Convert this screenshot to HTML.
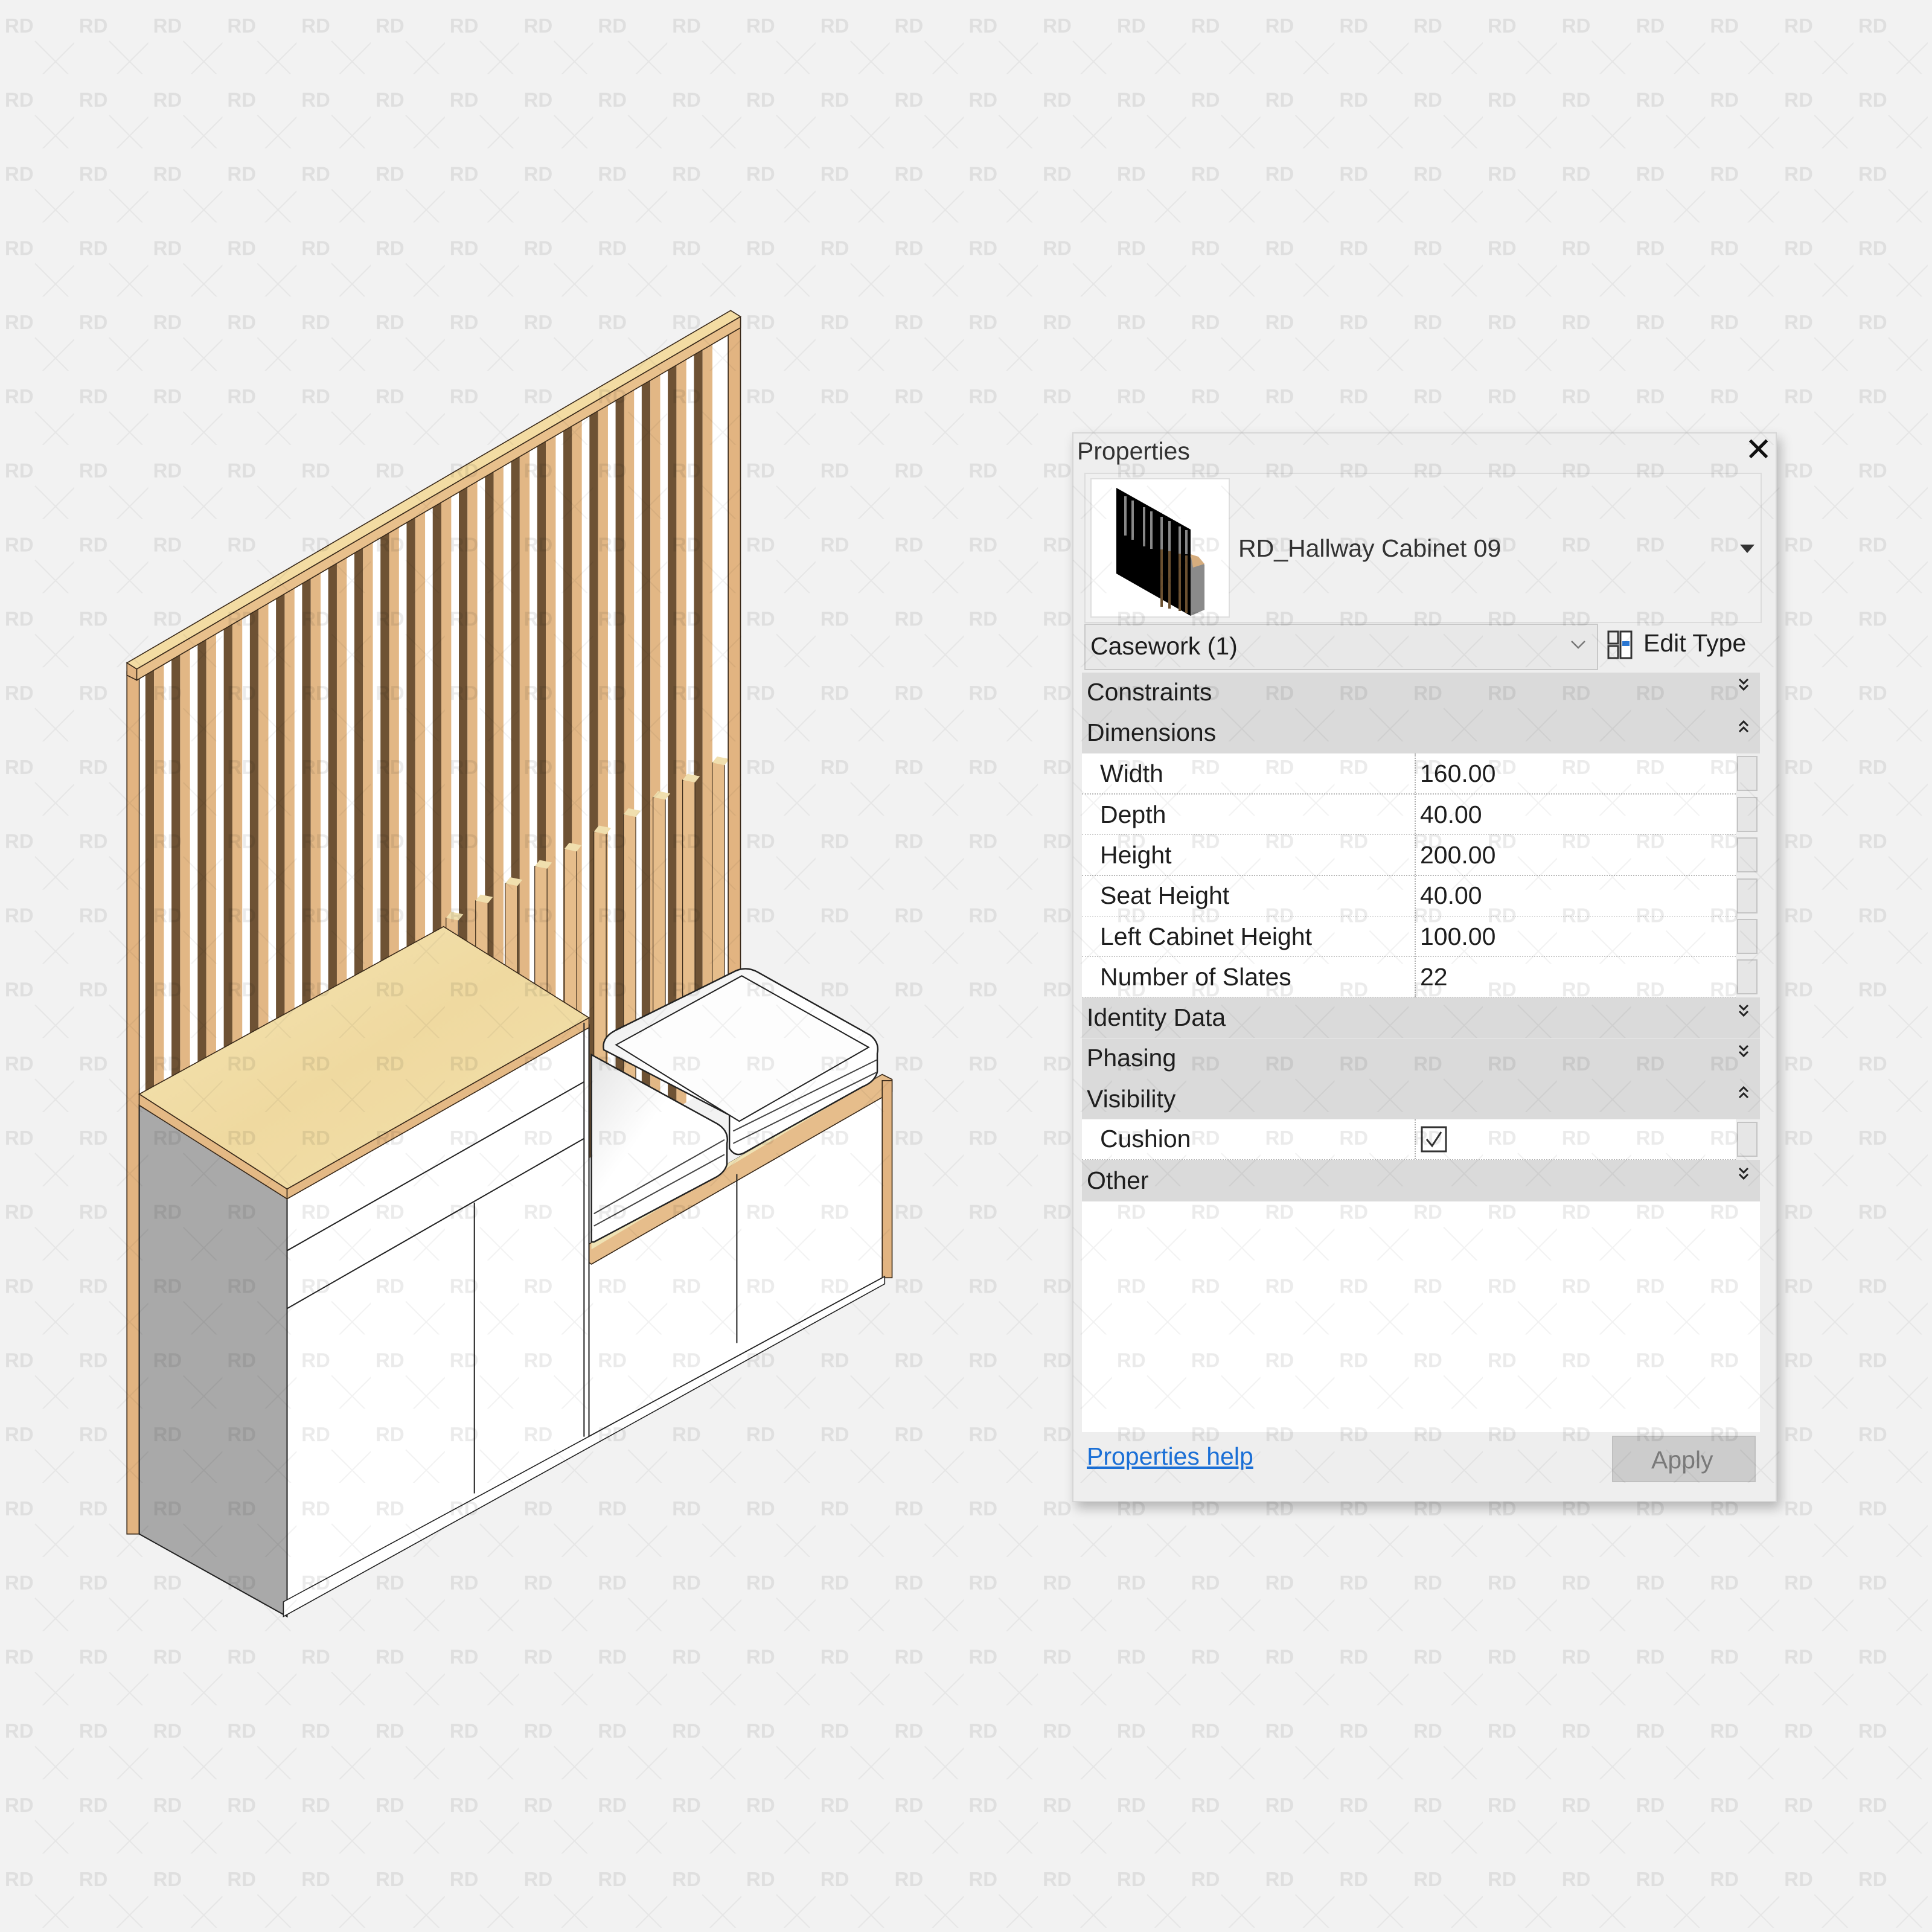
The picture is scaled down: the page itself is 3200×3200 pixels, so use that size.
<!DOCTYPE html>
<html><head><meta charset="utf-8">
<style>
html,body{margin:0;padding:0;background:#f2f2f2;}
body{width:3200px;height:3200px;position:relative;overflow:hidden;font-family:"Liberation Sans",sans-serif;}
.abs{position:absolute;}
#panel{left:1776px;top:716px;width:1163px;height:1768px;background:#eeeeee;border:2px solid #d6d6d6;box-shadow:6px 10px 18px rgba(0,0,0,0.25);}
.t{position:absolute;color:#1e1e1e;font-size:41px;line-height:1;white-space:nowrap;}
.hdr{position:absolute;left:1792px;width:1123px;height:67px;background:#dadada;}
.row{position:absolute;left:1792px;width:1083px;height:66px;background:#fff;border-bottom:2px dotted #b8b8b8;}
.sb{position:absolute;left:2877px;width:34px;height:58px;background:#e6e6e6;border:2px solid #c4c4c4;box-sizing:border-box;}
.chev{position:absolute;left:2877px;width:22px;height:26px;}
</style></head><body>

<svg class="abs" style="left:0;top:0" width="3200" height="3200" viewBox="0 0 1568 1568">
<defs>
<clipPath id="wall"><polygon points="103,545 600,258 600,870 478,940 478,1150 113,1240 103,1240"/></clipPath>
<linearGradient id="wood" x1="0" y1="0" x2="1" y2="1">
<stop offset="0" stop-color="#f5e6b4"/><stop offset="0.5" stop-color="#efd9a0"/><stop offset="1" stop-color="#f3e1ab"/></linearGradient>
<linearGradient id="cush" x1="0" y1="0" x2="1" y2="1">
<stop offset="0" stop-color="#e4e4e4"/><stop offset="0.4" stop-color="#fff"/><stop offset="1" stop-color="#fff"/></linearGradient>
</defs>
<g clip-path="url(#wall)">
<rect x="103" y="250" width="500" height="1000" fill="#ffffff"/>
<g fill="#6e5234">
<rect x="118" y="250" width="7" height="1000"/><rect x="139.2" y="250" width="7" height="1000"/><rect x="160.4" y="250" width="7" height="1000"/><rect x="181.6" y="250" width="7" height="1000"/><rect x="202.8" y="250" width="7" height="1000"/><rect x="224" y="250" width="7" height="1000"/><rect x="245.2" y="250" width="7" height="1000"/><rect x="266.4" y="250" width="7" height="1000"/><rect x="287.6" y="250" width="7" height="1000"/><rect x="308.8" y="250" width="7" height="1000"/><rect x="330" y="250" width="7" height="1000"/><rect x="351.2" y="250" width="7" height="1000"/><rect x="372.4" y="250" width="7" height="1000"/><rect x="393.6" y="250" width="7" height="1000"/><rect x="414.8" y="250" width="7" height="1000"/><rect x="436" y="250" width="7" height="1000"/><rect x="457.2" y="250" width="7" height="1000"/><rect x="478.4" y="250" width="7" height="1000"/><rect x="499.6" y="250" width="7" height="1000"/><rect x="520.8" y="250" width="7" height="1000"/><rect x="542" y="250" width="7" height="1000"/><rect x="563.2" y="250" width="7" height="1000"/>
</g>
<g fill="#e2b785">
<rect x="125" y="250" width="8" height="1000"/><rect x="146.2" y="250" width="8" height="1000"/><rect x="167.4" y="250" width="8" height="1000"/><rect x="188.6" y="250" width="8" height="1000"/><rect x="209.8" y="250" width="8" height="1000"/><rect x="231" y="250" width="8" height="1000"/><rect x="252.2" y="250" width="8" height="1000"/><rect x="273.4" y="250" width="8" height="1000"/><rect x="294.6" y="250" width="8" height="1000"/><rect x="315.8" y="250" width="8" height="1000"/><rect x="337" y="250" width="8" height="1000"/><rect x="358.2" y="250" width="8" height="1000"/><rect x="379.4" y="250" width="8" height="1000"/><rect x="400.6" y="250" width="8" height="1000"/><rect x="421.8" y="250" width="8" height="1000"/><rect x="443" y="250" width="8" height="1000"/><rect x="464.2" y="250" width="8" height="1000"/><rect x="485.4" y="250" width="8" height="1000"/><rect x="506.6" y="250" width="8" height="1000"/><rect x="527.8" y="250" width="8" height="1000"/><rect x="549" y="250" width="8" height="1000"/><rect x="570.2" y="250" width="8" height="1000"/>
</g>
<g fill="#e6bd8b" stroke="#3a2a1a" stroke-width="0.6">
<rect x="362" y="745" width="10" height="220"/><rect x="386" y="731" width="10" height="220"/><rect x="410" y="717" width="10" height="220"/><rect x="434" y="703" width="10" height="220"/><rect x="458" y="689" width="10" height="220"/><rect x="482" y="675" width="10" height="220"/><rect x="506" y="661" width="10" height="220"/><rect x="530" y="647" width="10" height="220"/><rect x="554" y="633" width="10" height="220"/><rect x="578" y="619" width="10" height="220"/>
</g>
<g fill="#f0dfae">
<polygon points="362,745 366,740 376,742 372,747"/><polygon points="386,731 390,726 400,728 396,733"/><polygon points="410,717 414,712 424,714 420,719"/><polygon points="434,703 438,698 448,700 444,705"/><polygon points="458,689 462,684 472,686 468,691"/><polygon points="482,675 486,670 496,672 492,677"/><polygon points="506,661 510,656 520,658 516,663"/><polygon points="530,647 534,642 544,644 540,649"/><polygon points="554,633 558,628 568,630 564,635"/><polygon points="578,619 582,614 592,616 588,621"/>
</g>
</g>
<rect x="103" y="545" width="10" height="700" fill="#e2b481" stroke="#3a2a1a" stroke-width="0.8"/>
<rect x="591" y="258" width="10" height="560" fill="#e2b481" stroke="#3a2a1a" stroke-width="0.8"/>
<polygon points="103,538 593,252 601,257 111,543" fill="#f3dca3" stroke="#3a2a1a" stroke-width="0.8"/>
<polygon points="103,538 111,543 111,552 103,548" fill="#e2b481" stroke="#3a2a1a" stroke-width="0.8"/>
<polygon points="111,543 601,257 601,266 111,552" fill="#e8c08c" stroke="#3a2a1a" stroke-width="0.8"/>

<polygon points="474,1022 718,880 718,1036 474,1168" fill="#fff" stroke="#222" stroke-width="1"/>
<polygon points="474,1012 716,872 724,876 724,886 480,1026 474,1022" fill="#e6bd8b" stroke="#3a2a1a" stroke-width="0.8"/>
<polygon points="480,1008 716,872 480,1014" fill="#efe2b4"/>
<rect x="716" y="877" width="8" height="160" fill="#e2b481" stroke="#3a2a1a" stroke-width="0.8"/>
<line x1="598" y1="953" x2="598" y2="1090" stroke="#222" stroke-width="1"/>
<path d="M480,856 L582,912 Q592,918 590,928 L590,945 Q588,952 580,956 L482,1008 L480,1008 Z" fill="url(#cush)" stroke="#222" stroke-width="1.2"/>
<path d="M482,985 L588,925 M482,995 L588,937" stroke="#444" stroke-width="1" fill="none"/>
<path d="M490,852 Q488,842 500,836 L597,788 Q606,784 615,789 L706,840 Q714,846 712,855 L712,870 Q710,878 700,882 L605,935 Q597,940 592,932 L592,905 Z" fill="url(#cush)" stroke="#222" stroke-width="1.2"/>
<path d="M500,848 L602,792 L705,850 L600,910 Z" fill="#fdfdfd" stroke="#222" stroke-width="1"/>
<path d="M595,918 L712,860 M595,928 L712,870" stroke="#444" stroke-width="1" fill="none"/>

<polygon points="113,897 233,972 233,1312 113,1245" fill="#a9a9a9" stroke="#222" stroke-width="1"/>
<polygon points="233,972 478,832 478,1166 233,1302" fill="#fff" stroke="#222" stroke-width="1"/>
<polygon points="113,888 360,752 478,826 233,965" fill="url(#wood)" stroke="#3a2a1a" stroke-width="0.8"/>
<polygon points="113,888 233,965 233,973 113,897" fill="#e4b985" stroke="#3a2a1a" stroke-width="0.8"/>
<polygon points="233,965 478,826 478,834 233,973" fill="#e4b985" stroke="#3a2a1a" stroke-width="0.8"/>
<line x1="233" y1="1015" x2="474" y2="878" stroke="#222" stroke-width="1"/>
<line x1="233" y1="1062" x2="474" y2="924" stroke="#222" stroke-width="1"/>
<line x1="385" y1="976" x2="385" y2="1212" stroke="#222" stroke-width="1"/>
<line x1="474" y1="830" x2="474" y2="1166" stroke="#222" stroke-width="1"/>
<polygon points="230,1300 718,1036 718,1042 230,1312" fill="#fff" stroke="#222" stroke-width="0.8"/>
</svg>

<div id="panel" class="abs"></div>
<div class="t" style="left:1784px;top:727px;color:#333;">Properties</div>
<div class="t" style="left:2890px;top:718px;font-size:54px;color:#111;">✕</div>
<div class="abs" style="left:1796px;top:783px;width:1118px;height:245px;border:2px solid #dcdcdc;background:#f0f0f0;"></div>
<div class="abs" style="left:1806px;top:792px;width:227px;height:227px;background:#fff;border:2px solid #dedede;"></div>
<svg class="abs" style="left:1806px;top:792px" width="230" height="230" viewBox="1806 792 230 230">
<polygon points="1849,808 1972,877 1972,1020 1849,950" fill="#000"/>
<g fill="#888"><rect x="1862" y="822" width="4" height="65"/><rect x="1874" y="829" width="4" height="65"/><rect x="1893" y="840" width="4" height="65"/><rect x="1905" y="847" width="4" height="62"/><rect x="1922" y="856" width="4" height="55"/><rect x="1935" y="863" width="4" height="50"/><rect x="1952" y="872" width="4" height="45"/><rect x="1963" y="878" width="4" height="40"/></g>
<g fill="#6b5030"><rect x="1922" y="910" width="4" height="95"/><rect x="1935" y="913" width="4" height="95"/><rect x="1952" y="917" width="4" height="95"/><rect x="1963" y="920" width="4" height="95"/></g>
<polygon points="1972,923 1995,935 1995,1010 1972,1020" fill="#8a8a8a"/>
<polygon points="1972,918 1985,922 1995,934 1976,940" fill="#d6ad7e"/>
</svg>
<div class="t" style="left:2051px;top:888px;color:#333;">RD_Hallway Cabinet 09</div>
<div class="abs" style="left:2882px;top:902px;width:0;height:0;border-left:12px solid transparent;border-right:12px solid transparent;border-top:14px solid #333;"></div>
<div class="abs" style="left:1796px;top:1033px;width:847px;height:73px;border:2px solid #c8c8c8;background:#e8e8e8;"></div>
<div class="t" style="left:1806px;top:1050px;">Casework (1)</div>
<svg class="abs" style="left:2600px;top:1058px" width="28" height="20"><polyline points="3,4 14,15 25,4" fill="none" stroke="#777" stroke-width="2.5"/></svg>
<svg class="abs" style="left:2662px;top:1044px" width="44" height="50"><rect x="2" y="2" width="16" height="20" fill="none" stroke="#333" stroke-width="3"/><rect x="2" y="26" width="16" height="20" fill="none" stroke="#333" stroke-width="3"/><rect x="22" y="2" width="18" height="44" fill="#fff" stroke="#333" stroke-width="3"/><rect x="25" y="18" width="12" height="8" fill="#2a78d4"/></svg>
<div class="t" style="left:2722px;top:1045px;">Edit Type</div>

<svg width="0" height="0" style="position:absolute"><defs>
<g id="dn"><polyline points="4,3 11,10 18,3" fill="none" stroke="#222" stroke-width="3"/><polyline points="4,13 11,20 18,13" fill="none" stroke="#222" stroke-width="3"/></g>
<g id="up"><polyline points="4,10 11,3 18,10" fill="none" stroke="#222" stroke-width="3"/><polyline points="4,20 11,13 18,20" fill="none" stroke="#222" stroke-width="3"/></g>
</defs></svg>

<div class="hdr" style="top:1114px;"></div><div class="t" style="left:1800px;top:1126px;">Constraints</div><svg class="chev" style="top:1122px"><use href="#dn"/></svg>
<div class="hdr" style="top:1181px;"></div><div class="t" style="left:1800px;top:1193px;">Dimensions</div><svg class="chev" style="top:1192px"><use href="#up"/></svg>
<div class="row" style="top:1248px;"></div><div class="t" style="left:1822px;top:1261px;">Width</div><div class="t" style="left:2352px;top:1261px;">160.00</div>
<div class="row" style="top:1316px;"></div><div class="t" style="left:1822px;top:1329px;">Depth</div><div class="t" style="left:2352px;top:1329px;">40.00</div>
<div class="row" style="top:1383px;"></div><div class="t" style="left:1822px;top:1396px;">Height</div><div class="t" style="left:2352px;top:1396px;">200.00</div>
<div class="row" style="top:1451px;"></div><div class="t" style="left:1822px;top:1463px;">Seat Height</div><div class="t" style="left:2352px;top:1463px;">40.00</div>
<div class="row" style="top:1518px;"></div><div class="t" style="left:1822px;top:1531px;">Left Cabinet Height</div><div class="t" style="left:2352px;top:1531px;">100.00</div>
<div class="row" style="top:1585px;"></div><div class="t" style="left:1822px;top:1598px;">Number of Slates</div><div class="t" style="left:2352px;top:1598px;">22</div>
<div class="abs" style="left:2343px;top:1248px;height:404px;border-left:2px dotted #b0b0b0;"></div>
<div class="sb" style="top:1252px"></div><div class="sb" style="top:1320px"></div><div class="sb" style="top:1387px"></div><div class="sb" style="top:1455px"></div><div class="sb" style="top:1522px"></div><div class="sb" style="top:1589px"></div>
<div class="hdr" style="top:1652px;"></div><div class="t" style="left:1800px;top:1665px;">Identity Data</div><svg class="chev" style="top:1662px"><use href="#dn"/></svg>
<div class="hdr" style="top:1720px;"></div><div class="t" style="left:1800px;top:1732px;">Phasing</div><svg class="chev" style="top:1729px"><use href="#dn"/></svg>
<div class="hdr" style="top:1787px;"></div><div class="t" style="left:1800px;top:1800px;">Visibility</div><svg class="chev" style="top:1798px"><use href="#up"/></svg>
<div class="row" style="top:1854px;"></div><div class="t" style="left:1822px;top:1866px;">Cushion</div>
<div class="abs" style="left:2343px;top:1854px;height:66px;border-left:2px dotted #b0b0b0;"></div>
<svg class="abs" style="left:2353px;top:1865px" width="46" height="46"><rect x="2" y="2" width="40" height="40" fill="#fff" stroke="#333" stroke-width="3"/><polyline points="10,22 19,33 34,10" fill="none" stroke="#333" stroke-width="3"/></svg>
<div class="sb" style="top:1858px"></div>
<div class="hdr" style="top:1921px;height:69px;"></div><div class="t" style="left:1800px;top:1935px;">Other</div><svg class="chev" style="top:1932px"><use href="#dn"/></svg>
<div class="abs" style="left:1792px;top:1990px;width:1123px;height:382px;background:#fff;"></div>
<div class="t" style="left:1800px;top:2392px;color:#1a6fd6;text-decoration:underline;">Properties help</div>
<div class="abs" style="left:2670px;top:2378px;width:238px;height:77px;background:#cccccc;border:2px solid #c0c0c0;box-sizing:border-box;"></div>
<div class="t" style="left:2735px;top:2398px;color:#7a7a7a;">Apply</div>

<svg class="abs" style="left:0;top:0" width="3200" height="3200">
<defs><pattern id="wm" x="0" y="0" width="122.8" height="122.8" patternUnits="userSpaceOnUse">
<text x="8" y="54" font-family="Liberation Sans, sans-serif" font-weight="bold" font-size="33" fill="rgba(0,0,0,0.08)">RD</text>
<path d="M58,68 L126,136 M126,68 L58,136" stroke="rgba(0,0,0,0.05)" stroke-width="2"/>
</pattern></defs>
<rect width="3200" height="3200" fill="url(#wm)"/>
</svg>
</body></html>
